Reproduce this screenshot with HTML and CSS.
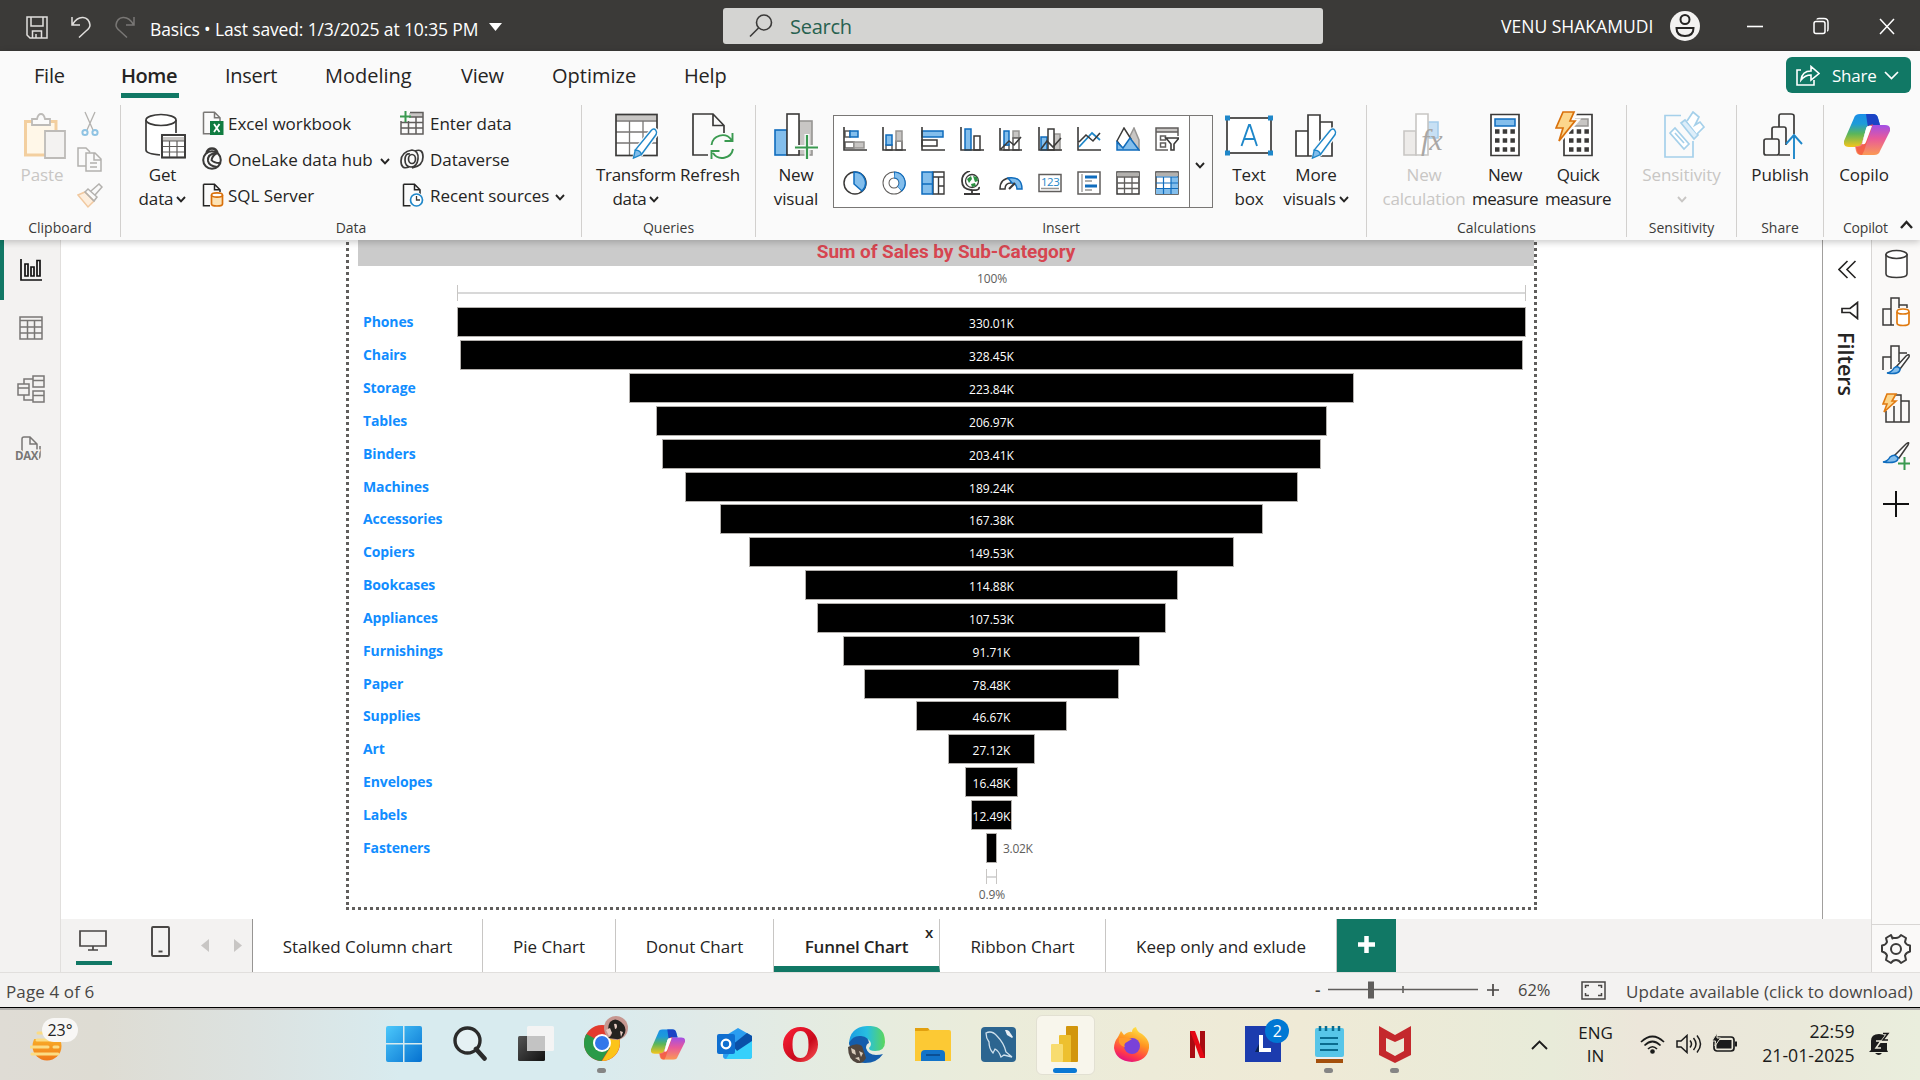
FILE: index.html
```html
<!DOCTYPE html>
<html lang="en">
<head>
<meta charset="utf-8">
<title>Basics - Power BI Desktop</title>
<link rel="stylesheet" href="styles.css">
</head>
<body>
<svg class="defs" width="0" height="0" aria-hidden="true">
  <defs>
    <linearGradient id="cpA" x1="0" y1="0" x2="0" y2="1"><stop offset="0" stop-color="#1a8fe8"/><stop offset=".3" stop-color="#1e9bd8"/><stop offset=".6" stop-color="#5bb65a"/><stop offset="1" stop-color="#f5c51c"/></linearGradient>
    <linearGradient id="cpB" x1="0" y1="0" x2="0" y2="1"><stop offset="0" stop-color="#a24fe6"/><stop offset=".45" stop-color="#e8599a"/><stop offset="1" stop-color="#fb9a54"/></linearGradient>
    <linearGradient id="win" x1="0" y1="0" x2="1" y2="1"><stop offset="0" stop-color="#4cc8fb"/><stop offset="1" stop-color="#0571d0"/></linearGradient>
    <linearGradient id="edge" x1="0" y1="0" x2="1" y2="0"><stop offset="0" stop-color="#1b9de2"/><stop offset=".5" stop-color="#27bfe0"/><stop offset="1" stop-color="#5bd65c"/></linearGradient>
    <linearGradient id="fox" x1=".8" y1="0" x2=".4" y2="1"><stop offset="0" stop-color="#fff04a"/><stop offset=".45" stop-color="#ff9422"/><stop offset=".8" stop-color="#ff3a4a"/><stop offset="1" stop-color="#e3137f"/></linearGradient>
    <linearGradient id="opera" x1="0" y1="0" x2="1" y2="1"><stop offset="0" stop-color="#ff2038"/><stop offset=".6" stop-color="#c90a1c"/><stop offset="1" stop-color="#ff5a5a"/></linearGradient>
    <linearGradient id="sun" x1="0" y1="0" x2="0" y2="1"><stop offset="0" stop-color="#fbc02d"/><stop offset="1" stop-color="#f07818"/></linearGradient>
    <linearGradient id="dark" x1="0" y1="0" x2="1" y2="1"><stop offset="0" stop-color="#555"/><stop offset="1" stop-color="#111"/></linearGradient>
    <symbol id="chev" viewBox="0 0 10 7"><path d="M1 1l4 4.4L9 1" fill="none" stroke="currentColor" stroke-width="1.9"/></symbol>
    <symbol id="page" viewBox="0 0 24 24"><path d="M1.5 1.2h11l5.500 5.500v5M1.500 1.200v21.500h7M12.500 1.200v5.500H18" fill="none" stroke="currentColor" stroke-width="1.500"/></symbol>
    <symbol id="pencil" viewBox="0 0 28 36"><path d="M3 26L21 4q3-3 5.500-.5t.5 5L10 31l-8 4z" fill="#fafafa" stroke="#fafafa" stroke-width="4"/><path d="M3 26L21 4q3-3 5-.5t.5 5L10 31z" fill="#fff" stroke="#1f87c9" stroke-width="1.700"/><path d="M3 26l-2 9 9-4q-1-5-7-5z" fill="#83beec" stroke="#1f87c9" stroke-width="1.500"/></symbol>
    <symbol id="copilot" viewBox="0 0 46 41"><path d="M10 4q1-4 6-4h13q4 0 5 4l2 7H26q-3 0-4 4l-4 14q-1 4-6 4H5q-6 0-5-6z" fill="url(#cpA)"/><path d="M22 0h7q4 0 5 4l2 7h-7q-4 0-5 3z" fill="#1c43c5"/><path d="M36 37q-1 4-6 4H17q-4 0-5-4l-1-5q5 1 7-3l5-14q1-4 5-4h13q6 0 5 6z" fill="url(#cpB)"/><path d="M24 12l-6 19q-1 2-6 2l1 4q1 4 5 4l2-4 9-27z" fill="#f4573e" opacity=".75"/><path d="M22 15q1-4 6-3l-6 16q-1 3-4 2z" fill="#fff"/></symbol>
  </defs>
</svg>

<header class="titlebar">
  <svg class="tb-save" width="22" height="23" viewBox="0 0 22 23" fill="none" stroke="#e1dfdd" stroke-width="1.500"><path d="M1 1h20v21H4l-3-3zM5 1v9h12V1M6.500 22v-7h9v7M10 22v-4"/></svg>
  <svg class="tb-undo" width="20" height="22" viewBox="0 0 20 22" fill="none" stroke="#e1dfdd" stroke-width="1.500"><path d="M1 1v8h8M1.500 8.500Q6 1 12 1.500T19 9q0 3-4 6l-7 6.500"/></svg>
  <svg class="tb-redo" width="20" height="22" viewBox="0 0 20 22" fill="none" stroke="#797775" stroke-width="1.500"><path d="M19 1v8h-8M18.500 8.500Q14 1 8 1.500T1 9q0 3 4 6l7 6.500"/></svg>
  <div class="doc-title">Basics • Last saved: 1/3/2025 at 10:35 PM</div>
  <svg class="doc-caret" width="13" height="8" viewBox="0 0 13 8"><path d="M0 0h13L6.500 8z" fill="#fff"/></svg>
  <div class="search">
    <svg width="24" height="24" viewBox="0 0 24 24" fill="none" stroke="#3b3a39" stroke-width="1.600"><circle cx="15" cy="8.500" r="7.500"/><path d="M9.500 14L1 22.500"/></svg>
    <span>Search</span>
  </div>
  <div class="user">VENU SHAKAMUDI</div>
  <svg class="avatar" width="30" height="30" viewBox="0 0 30 30"><circle cx="15" cy="15" r="15" fill="#f3f2f1"/><g fill="none" stroke="#252423" stroke-width="2"><circle cx="15" cy="8.500" r="4.500"/><path d="M6.500 17h17q0 8-8.500 8t-8.500-8z"/></g></svg>
  <div class="winbtns">
    <svg width="16" height="18" viewBox="0 0 16 18"><path d="M0 9.500h16" stroke="#fff" stroke-width="1.600"/></svg>
    <svg width="16" height="18" viewBox="0 0 16 18" fill="none" stroke="#fff" stroke-width="1.500"><rect x="1" y="4.500" width="11" height="12" rx="2"/><path d="M4 2.500q0-1 2-1h5q4 0 4 4V12q0 2-1 2"/></svg>
    <svg width="16" height="18" viewBox="0 0 16 18" stroke="#fff" stroke-width="1.500"><path d="M1 2l14 15M15 2L1 17"/></svg>
  </div>
</header>

<section class="ribbon">
  <nav class="tabs">
    <a>File</a><a class="on">Home</a><a>Insert</a><a>Modeling</a><a>View</a><a>Optimize</a><a>Help</a>
    <button class="share"><svg width="24" height="21" viewBox="0 0 24 21" fill="none" stroke="#fff" stroke-width="1.600"><path d="M5 5H1v15h17v-5M5 15q1-9 10-9V1.500l8 7-8 6.500v-5q-6 0-10 5z"/></svg><span>Share</span><svg width="15" height="9" viewBox="0 0 15 9"><path d="M1 1l6.500 6.500L14 1" fill="none" stroke="#fff" stroke-width="1.700"/></svg></button>
  </nav>
  <div class="groups">
    <div class="group g-clip">
      <div class="items">
        <div class="big off b-paste"><svg width="42" height="46" viewBox="0 0 42 46" fill="none" stroke-width="1.800"><path d="M1.500 8.500H32V42H1.500z" stroke="#f3cf9f" stroke-width="3" fill="#fff7e8"/><path d="M8 12V6h5q1-5 4-5t4 5h5v6z" fill="#fafafa" stroke="#bdbbb8"/><path d="M21 18h20v27H21z" fill="#f3f2f1" stroke="#bdbbb8"/></svg><span>Paste</span></div>
        <div class="smallcol">
          <svg width="18" height="26" viewBox="0 0 18 26" fill="none" stroke="#b3b1ae" stroke-width="1.300"><path d="M4 1l8 18M14 1L6 19"/><g stroke="#8fc3e3" stroke-width="2"><circle cx="4" cy="21.500" r="2.600"/><circle cx="14" cy="21.500" r="2.600"/></g></svg>
          <svg width="26" height="26" viewBox="0 0 26 26" fill="#fafafa" stroke="#b3b1ae" stroke-width="1.500"><path d="M9 19H1V1h8l4 4M9 6h9l6 6v12H9zM17 6v7h7M13 16h7M13 20h7"/></svg>
          <svg width="26" height="26" viewBox="0 0 26 26" fill="none" stroke="#b3b1ae" stroke-width="1.500"><path d="M1 12l7-3 9 9-6 6z" stroke="#f1c9a0" fill="#fdeedd"/><path d="M8 9l3-3 9 8-3 4zM14 8l8-7 3 3-7 8"/></svg>
        </div>
      </div>
      <div class="glabel">Clipboard</div>
    </div>
    <div class="group g-data">
      <div class="items">
        <div class="big b-get"><svg width="41" height="46" viewBox="0 0 41 46" fill="none" stroke="#3b3a39" stroke-width="1.700"><path d="M1 7v30q0 4 15 5h15V7z" fill="#fff" stroke="none"/><ellipse cx="16" cy="7" rx="15" ry="5.500" fill="#fff"/><path d="M1 7v30q0 4 15 5M31 7v13"/><rect x="15" y="20" width="26" height="26" fill="#fafafa" stroke="none"/><rect x="17" y="22" width="23" height="22.500" fill="#fff"/><path d="M17 26h23" stroke="#c8c6c4" stroke-width="4"/><path d="M17 28h23M17 33.500h23M17 39h23M24.500 28v16M32 28v16" stroke="#605e5c" stroke-width="1.200"/><rect x="17" y="22" width="23" height="22.500"/></svg><span>Get</span><span>data <svg class="cv"><use href="#chev"/></svg></span></div>
        <ul class="list l1">
          <li><svg width="24" height="24" viewBox="0 0 24 24"><use href="#page" color="#797775"/><rect x="8" y="10" width="13.500" height="14" fill="#107c41"/><path d="M12 13l5.500 8M17.500 13L12 21" stroke="#fff" stroke-width="1.800"/></svg>Excel workbook</li>
          <li><svg width="24" height="24" viewBox="0 0 24 24" fill="none" stroke="#3b3a39" stroke-width="2"><circle cx="10" cy="13" r="8.800"/><path d="M4.500 6Q6 1.500 10 1.500T15.500 6" stroke-width="2.600"/><path d="M15 5.500Q5 7 6 14q1 5 9 6M9 12.500q3 4 10 3.500M9.500 13q1-5 6-7"/></svg>OneLake data hub <svg class="cv"><use href="#chev"/></svg></li>
          <li><svg width="24" height="24" viewBox="0 0 24 24"><use href="#page"/><rect x="8" y="9" width="14" height="15" fill="#fafafa"/><path d="M9.500 12v9q0 2 5.500 2t5.500-2v-9" fill="#fde3b5" stroke="#d9700a" stroke-width="1.700"/><ellipse cx="15" cy="12" rx="5.500" ry="2.200" fill="#fff" stroke="#d9700a" stroke-width="1.700"/></svg>SQL Server</li>
        </ul>
        <ul class="list l2">
          <li><svg width="24" height="24" viewBox="0 0 24 24" fill="none"><path d="M9 2h14v4H9z" fill="#c8c6c4"/><path d="M1 10v13h22V1.500H10M9 6h14M1 11.500h22M1 17h22M8.500 10v13M16 6v17" stroke="#605e5c" stroke-width="1.500"/><path d="M5.500 0v11M0 5.500h11" stroke="#3a9a50" stroke-width="2"/></svg>Enter data</li>
          <li><svg width="24" height="24" viewBox="0 0 24 24" fill="none" stroke="#3b3a39" stroke-width="1.700"><ellipse cx="12" cy="12" rx="3.500" ry="4.500"/><path d="M9 20Q1 23 1 14T12 3q7 1 6 9t-7 8Q5 20 5 13t5-6M15 4q8-3 8 6T12 21"/></svg>Dataverse</li>
          <li><svg width="24" height="24" viewBox="0 0 24 24"><g transform="translate(2)"><use href="#page"/><circle cx="14.500" cy="17" r="7.500" fill="#fafafa"/><circle cx="14.500" cy="17" r="6" fill="#fff" stroke="#1f87c9" stroke-width="1.700"/><path d="M14.500 13v4h3.500" fill="none" stroke="#3b3a39" stroke-width="1.300"/></g></svg>Recent sources <svg class="cv"><use href="#chev"/></svg></li>
        </ul>
      </div>
      <div class="glabel">Data</div>
    </div>
    <div class="group g-query">
      <div class="items">
        <div class="big b-trans"><svg width="46" height="46" viewBox="0 0 46 46" fill="none"><rect x="1" y="1.500" width="41" height="41" fill="#fff"/><rect x="1" y="1.500" width="41" height="6" fill="#c8c6c4"/><path d="M1 8h41M1 19h41M1 30h41M14.500 8v35M28 8v35" stroke="#797775" stroke-width="1.300"/><rect x="1" y="1.500" width="41" height="41" stroke="#3b3a39" stroke-width="1.700"/><use href="#pencil" x="14" y="14" width="32" height="32"/></svg><span>Transform</span><span>data <svg class="cv"><use href="#chev"/></svg></span></div>
        <div class="big b-ref"><svg width="42" height="46" viewBox="0 0 42 46" fill="none" stroke-width="1.700"><path d="M16 42H1V1h20l11 11.500V20M21 1v11.500h11" stroke="#3b3a39"/><g stroke="#3a9a50" stroke-width="1.900"><path d="M19.500 32a11 11 0 0 1 20-5M41 36a11 11 0 0 1-20 4M40.500 20v8h-8M19.500 46v-8h8"/></g></svg><span>Refresh</span></div>
      </div>
      <div class="glabel">Queries</div>
    </div>
    <div class="group g-insert">
      <div class="items">
        <div class="big b-nv"><svg width="44" height="46" viewBox="0 0 44 46" stroke-width="1.600"><rect x="25" y="8" width="13" height="34" fill="#c8c6c4" stroke="#979593"/><rect x="1" y="17" width="12" height="25" fill="#83beec" stroke="#0f6cbd"/><rect x="13" y="1" width="12" height="41" fill="#fff" stroke="#3b3a39"/><path d="M33 21v25M20 34.500h24" stroke="#fafafa" stroke-width="5"/><path d="M33 22v24M21 34.500h23" stroke="#3a9a50" stroke-width="2.200"/></svg><span>New</span><span>visual</span></div>
        <div class="gallery">
          <div class="viz">
            <svg viewBox="0 0 24 24"><path d="M2 4h5v6H2zM2 15h9v6H2z" fill="#fff" stroke="#605e5c"/><path d="M11 15h10v6H11z" fill="#c8c6c4" stroke="#979593"/><path d="M7 4h8v6H7z" fill="#83beec" stroke="#0f6cbd"/><path d="M1 0v23h23" class="ax"/></svg>
            <svg viewBox="0 0 24 24"><path d="M4 18h6v5H4zM14 14h6v9h-6z" fill="#fff" stroke="#605e5c"/><path d="M14 4h6v10h-6z" fill="#c8c6c4" stroke="#979593"/><path d="M4 8h6v10H4z" fill="#83beec" stroke="#0f6cbd"/><path d="M1 0v23h23" class="ax"/></svg>
            <svg viewBox="0 0 24 24"><path d="M1 13h15v6H1z" fill="#fff" stroke="#3b3a39"/><path d="M1 4h21v6H1z" fill="#83beec" stroke="#0f6cbd"/><path d="M1 0v23h23" class="ax"/></svg>
            <svg viewBox="0 0 24 24"><path d="M14 9h6v14h-6z" fill="#fff" stroke="#3b3a39"/><path d="M5 2h6v21H5z" fill="#83beec" stroke="#0f6cbd"/><path d="M1 0v23h23" class="ax"/></svg>
            <svg viewBox="0 0 24 24"><path d="M14 4h6v7h-6z" fill="#c8c6c4" stroke="#979593"/><path d="M14 11h6v12h-6zM5 18h5v5H5z" fill="#fff" stroke="#605e5c"/><path d="M5 4h5v14H5z" fill="#83beec" stroke="#0f6cbd"/><path d="M2 22l8-8 5 4 7-8M1 1v22h22" class="ax"/></svg>
            <svg viewBox="0 0 24 24"><path d="M16 7h6v16h-6z" fill="#c8c6c4" stroke="#979593"/><path d="M3 10h6v13H3z" fill="#83beec" stroke="#0f6cbd"/><path d="M10 2h6v21h-6z" fill="#fff" stroke="#3b3a39"/><path d="M3 22l6-8 6 6 8-9M1 0v23h23" class="ax"/></svg>
            <svg viewBox="0 0 24 24"><path d="M2 20L15 6l8 7" fill="none" stroke="#1f87c9" stroke-width="1.800"/><path d="M2 15l7-7 7 6 7-8M1 0v23h23" class="ax"/></svg>
            <svg viewBox="0 0 24 24"><path d="M12 13l6-12 5 12v10z" fill="#c8c6c4" stroke="#979593"/><path d="M1 14L8 1l7 11-8 10z" fill="#fff" stroke="#3b3a39"/><path d="M1 23v-8l6 6 7-10 9 12z" fill="#83beec" stroke="#0f6cbd"/></svg>
            <svg viewBox="0 0 24 24"><path d="M1 1h22v4H1z" fill="#c8c6c4"/><path d="M13 23H1V1h22v8M1 5h22M5.500 9h5v4h-5zM5.500 16h5v4h-5z" fill="none" stroke="#605e5c" stroke-width="1.500"/><path d="M11 11h13l-5 6v6h-3v-6z" fill="#fff" class="ax2"/></svg>
            <svg viewBox="0 0 24 24"><circle cx="12" cy="12" r="11" fill="#fff" stroke="#3b3a39" stroke-width="1.500"/><path d="M11 1a11 11 0 0 1 8 19l-8-7z" fill="#83beec" stroke="#0f6cbd"/></svg>
            <svg viewBox="0 0 24 24"><circle cx="12" cy="12" r="8" fill="none" stroke="#605e5c" stroke-width="7"/><circle cx="12" cy="12" r="8" fill="none" stroke="#fff" stroke-width="5"/><path d="M12 4a8 8 0 0 1 5.500 14" fill="none" stroke="#0f6cbd" stroke-width="7"/><path d="M12.700 4a8 8 0 0 1 5 13.500" fill="none" stroke="#83beec" stroke-width="5.200"/></svg>
            <svg viewBox="0 0 24 24"><path d="M12 1h11v22H12zM12 6h11M17.500 6v17M17.500 15h5.500" fill="#fff" stroke="#3b3a39" stroke-width="1.400"/><path d="M1 1h10.500v22H1zM1 13h10.500" fill="#83beec" stroke="#0f6cbd" stroke-width="1.500"/></svg>
            <svg viewBox="0 0 24 24"><circle cx="12" cy="10" r="6.500" fill="#fff" stroke="#3b3a39" stroke-width="1.300"/><path d="M7 8l4-3 1 3-3 4zM13 5l4 1 1 4-3 1zM11 13l4-1 1 3-4 1z" fill="#2a9040"/><path d="M10 0Q2 2 2 10t9 9 8-3M12 19v4M4 23h16" fill="none" stroke="#3b3a39" stroke-width="1.800"/></svg>
            <svg viewBox="0 0 24 24"><path d="M1 18q0-11 11-11v5q-6 0-6 6z" fill="#fff" stroke="#3b3a39" stroke-width="1.500"/><path d="M9 7q14-2 14 11h-5q0-5-5-6z" fill="#83beec" stroke="#0f6cbd" stroke-width="1.500"/><path d="M10 18l6-6" stroke="#3b3a39" stroke-width="2.200"/></svg>
            <svg viewBox="0 0 24 24"><rect x="1" y="3.500" width="22" height="17" fill="#fff" stroke="#605e5c" stroke-width="1.500"/><path d="M3 17.500h18" stroke="#979593" stroke-width="1.500"/><text x="3" y="15" class="n123">123</text></svg>
            <svg viewBox="0 0 24 24"><rect x="1" y="1" width="22" height="22" fill="#fff" stroke="#605e5c" stroke-width="1.500"/><path d="M5 3v18M8 10h7M8 19h7" stroke="#979593" stroke-width="1.300"/><path d="M8 6h12M8 15h12" stroke="#0f6cbd" stroke-width="2.800"/></svg>
            <svg viewBox="0 0 24 24"><path d="M1 1h22v22H1z" fill="#fff" stroke="#3b3a39" stroke-width="1.500"/><path d="M1 3.500h22" stroke="#b3b1ae" stroke-width="4"/><path d="M1 6h22M1 12h22M1 17.500h22M8.500 6v17M16 6v17" stroke="#605e5c" stroke-width="1.300"/></svg>
            <svg viewBox="0 0 24 24"><path d="M1 1h22v22H1z" fill="#fff" stroke="#3b3a39" stroke-width="1.500"/><path d="M1 3.500h22" stroke="#b3b1ae" stroke-width="4"/><path d="M16 6h7v17H1v-5.500h15z" fill="#83beec"/><path d="M1 6h22M1 12h22M1 17.500h22M8.500 6v17M16 6v17" stroke="#0f6cbd" stroke-width="1.200"/></svg>
          </div>
          <div class="drop"><svg class="cv"><use href="#chev"/></svg></div>
        </div>
        <div class="big b-text"><svg width="48" height="46" viewBox="0 0 48 46"><rect x="2" y="5" width="44" height="35" fill="#fff" stroke="#3b3a39" stroke-width="1.700"/><path d="M16.500 33L24 12h1l7 21M19 26h11" fill="none" stroke="#1f87c9" stroke-width="1.900"/><path d="M0 2.500h5v5H0zM43 2.500h5v5h-5zM0 37.500h5v5H0zM43 37.500h5v5h-5z" fill="#1f87c9"/></svg><span>Text</span><span>box</span></div>
        <div class="big b-more"><svg width="45" height="46" viewBox="0 0 45 46" fill="#fff" stroke="#3b3a39" stroke-width="1.700"><path d="M1 18h12v25H1zM25 9h12v34H25zM13 2h12v41H13z"/><use href="#pencil" x="12" y="14" width="34" height="32"/></svg><span>More</span><span>visuals <svg class="cv"><use href="#chev"/></svg></span></div>
      </div>
      <div class="glabel">Insert</div>
    </div>
    <div class="group g-calc">
      <div class="items">
        <div class="big off b-nc"><svg width="42" height="46" viewBox="0 0 42 46" stroke-width="1.600"><path d="M25 9h10v16H25z" fill="#c7e0f4" stroke="#a5cdec"/><path d="M1 18h12v24H1z" fill="#edebe9" stroke="#c8c6c4"/><path d="M13 1h12v41H13z" fill="#fff" stroke="#c8c6c4"/><text x="18" y="37" class="fx">fx</text></svg><span>New</span><span>calculation</span></div>
        <div class="big b-nm"><svg width="30" height="46" viewBox="0 0 30 46"><path d="M1 1.500h28v41H1z" fill="#fff" stroke="#3b3a39" stroke-width="1.700"/><path d="M5 6h20v7H5z" fill="#83beec" stroke="#0f6cbd" stroke-width="1.500"/><path d="M5 18.500h20M5 27.500h20M5 36.500h20" stroke="#3b3a39" stroke-width="4.500" stroke-dasharray="4.500 3.200"/></svg><span>New</span><span>measure</span></div>
        <div class="big b-qm"><svg width="38" height="48" viewBox="0 0 38 48"><path d="M9 3.500h28v41H9z" fill="#fff" stroke="#3b3a39" stroke-width="1.700"/><path d="M16 8h17v7H16z" fill="#c8c6c4" stroke="#979593" stroke-width="1.500"/><path d="M14 20.500h20M14 29.500h20M14 38.500h20" stroke="#3b3a39" stroke-width="4.500" stroke-dasharray="4.500 3.200"/><path d="M8 1h12l-4 9h5L4 30l4-13H1z" fill="#fcd68c" stroke="#fafafa" stroke-width="5"/><path d="M8 1h11l-4 9h5L4 30l4-13H1z" fill="#fcd68c" stroke="#d9700a" stroke-width="1.700"/></svg><span>Quick</span><span>measure</span></div>
      </div>
      <div class="glabel">Calculations</div>
    </div>
    <div class="group g-sens">
      <div class="items"><div class="big off b-se"><svg width="41" height="48" viewBox="0 0 41 48" fill="none" stroke="#a5d0ea" stroke-width="1.700"><path d="M17 4.500H1V46h28V30"/><path d="M6 22l5-5 14 16-5 5zM11 22l9 10" fill="#fff"/><path d="M17 12l4-3 13 15-4 4z" fill="#ddeefa"/><path d="M23 10l6-9 6 5-4 8 5-3 4 5-7 7" fill="#fff"/></svg><span>Sensitivity</span><span><svg class="cv"><use href="#chev"/></svg></span></div></div>
      <div class="glabel">Sensitivity</div>
    </div>
    <div class="group g-share">
      <div class="items"><div class="big b-pub"><svg width="41" height="46" viewBox="0 0 41 46" fill="none" stroke="#3b3a39" stroke-width="1.700"><rect x="1" y="26" width="15" height="16" rx="2"/><path d="M9 26V16q0-2 2-2h10q2 0 2 2v16M16 14V3q0-2 2-2h10q3 0 3 2v18M16 42h11"/><path d="M31 46V22M23 31l8-9 8 9" stroke="#1f87c9" stroke-width="1.900"/></svg><span>Publish</span></div></div>
      <div class="glabel">Share</div>
    </div>
    <div class="group g-cop">
      <div class="items"><div class="big b-cop"><svg width="46" height="41" viewBox="0 0 46 41"><use href="#copilot"/></svg><span>Copilo</span></div></div>
      <div class="glabel"><span>Copilot</span><svg width="13" height="9" viewBox="0 0 13 9"><path d="M1 8l5.500-6L12 8" fill="none" stroke="#252423" stroke-width="2.400"/></svg></div>
    </div>
  </div>
</section>

<div class="workspace">
  <aside class="rail">
    <div class="rail-item on"><svg width="22" height="22" viewBox="0 0 22 22" fill="none" stroke="#111" stroke-width="1.700"><path d="M1 0v21h21M5 5h3v12H5zM11 8h3v9h-3zM17 1.500h3V17h-3z"/></svg></div>
    <div class="rail-item"><svg width="24" height="24" viewBox="0 0 24 24" fill="none" stroke="#797775" stroke-width="1.500"><path d="M1 1h22v22H1zM1 4.500h22M1 11h22M1 17h22M8.500 4.500V23M15.500 4.500V23"/></svg></div>
    <div class="rail-item"><svg width="28" height="28" viewBox="0 0 28 28" fill="none" stroke="#797775" stroke-width="1.500"><path d="M1 9h11v11H1zM1 13h11M16 1h11v11H16zM16 5.500h11M16 16h11v11H16zM16 20.500h11M7 9V4h9M7 20v5h9"/></svg></div>
    <div class="rail-item"><svg width="30" height="28" viewBox="0 0 30 28" fill="none" stroke="#797775" stroke-width="1.500"><path d="M8 16V3q0-2 2-2h6l7 7v9q0 4-3 6M16 1v7h7M26 10v9q0 4-3 5"/><text x="1" y="24" class="dax">DAX</text></svg></div>
  </aside>

  <main class="center">
    <div class="canvas-row">
      <div class="canvas">
        <div class="frame">
          <h1>Sum of Sales by Sub-Category</h1>
          <div class="pct">100%</div>
          <div class="range"></div>
          <div class="funnel">
            <div class="row"><b>Phones</b><div class="track"><i style="width:100%">330.01K</i></div></div>
            <div class="row"><b>Chairs</b><div class="track"><i style="width:99.53%">328.45K</i></div></div>
            <div class="row"><b>Storage</b><div class="track"><i style="width:67.83%">223.84K</i></div></div>
            <div class="row"><b>Tables</b><div class="track"><i style="width:62.72%">206.97K</i></div></div>
            <div class="row"><b>Binders</b><div class="track"><i style="width:61.64%">203.41K</i></div></div>
            <div class="row"><b>Machines</b><div class="track"><i style="width:57.34%">189.24K</i></div></div>
            <div class="row"><b>Accessories</b><div class="track"><i style="width:50.72%">167.38K</i></div></div>
            <div class="row"><b>Copiers</b><div class="track"><i style="width:45.31%">149.53K</i></div></div>
            <div class="row"><b>Bookcases</b><div class="track"><i style="width:34.81%">114.88K</i></div></div>
            <div class="row"><b>Appliances</b><div class="track"><i style="width:32.58%">107.53K</i></div></div>
            <div class="row"><b>Furnishings</b><div class="track"><i style="width:27.79%">91.71K</i></div></div>
            <div class="row"><b>Paper</b><div class="track"><i style="width:23.78%">78.48K</i></div></div>
            <div class="row"><b>Supplies</b><div class="track"><i style="width:14.14%">46.67K</i></div></div>
            <div class="row"><b>Art</b><div class="track"><i style="width:8.22%">27.12K</i></div></div>
            <div class="row"><b>Envelopes</b><div class="track"><i style="width:4.99%">16.48K</i></div></div>
            <div class="row"><b>Labels</b><div class="track"><i style="width:3.78%">12.49K</i></div></div>
            <div class="row"><b>Fasteners</b><div class="track"><i style="width:1%"></i><span class="outside">3.02K</span></div></div>
          </div>
          <div class="range end"></div>
          <div class="pct low">0.9%</div>
        </div>
      </div>
      <aside class="filters">
        <svg width="19" height="19" viewBox="0 0 19 19" fill="none" stroke="#252423" stroke-width="1.600"><path d="M9.500 1L1 9.500 9.500 18M17.500 1L9 9.500l8.500 8.500"/></svg>
        <svg class="funnel-ico" width="18" height="19" viewBox="0 0 18 19" fill="none" stroke="#252423" stroke-width="1.700"><path d="M16.500 1.500v16L9 11.500H1v-4h8z"/></svg>
        <span>Filters</span>
      </aside>
    </div>
    <div class="pages">
      <div class="views">
        <div class="view on"><svg width="28" height="21" viewBox="0 0 28 21" fill="none" stroke="#484644" stroke-width="1.700"><path d="M1 1h26v15H1zM14 16v4M9 20h10"/></svg></div>
        <svg class="phone" width="19" height="31" viewBox="0 0 19 31" fill="none" stroke="#484644" stroke-width="1.900"><rect x="1" y="1" width="17" height="29" rx="1"/><path d="M7.500 25.500h4"/></svg>
        <svg class="prev" width="8" height="13"><path d="M8 0v13L0 6.500z" fill="#c8c6c4"/></svg>
        <svg class="next" width="8" height="13"><path d="M0 0v13l8-6.500z" fill="#c8c6c4"/></svg>
      </div>
      <div class="ptab p1">Stalked Column chart</div>
      <div class="ptab p2">Pie Chart</div>
      <div class="ptab p3">Donut Chart</div>
      <div class="ptab p4 on">Funnel Chart<span class="x">x</span></div>
      <div class="ptab p5">Ribbon Chart</div>
      <div class="ptab p6">Keep only and exlude</div>
      <button class="add"><svg width="17" height="17" viewBox="0 0 17 17"><path d="M8.500 0v17M0 8.500h17" stroke="#fff" stroke-width="4.500"/></svg></button>
    </div>
  </main>

  <aside class="panes">
    <svg width="28" height="30" viewBox="0 0 28 30" fill="#fff" stroke="#3b3a39" stroke-width="1.600"><path d="M4 5v20q0 3.500 10.500 3.500T25 25V5"/><ellipse cx="14.500" cy="5.500" rx="10.500" ry="4"/></svg>
    <svg width="28" height="30" viewBox="0 0 28 30" fill="none" stroke="#3b3a39" stroke-width="1.500"><path d="M12 28H1V12h8M9 28V1h8v10M17 8h8v3"/><path d="M15 15v11q0 2.500 6 2.500t6-2.500V15" fill="#fff" stroke="#e07a10" stroke-width="1.700"/><ellipse cx="21" cy="14.500" rx="6" ry="2.500" fill="#fff" stroke="#e07a10" stroke-width="1.700"/></svg>
    <svg width="28" height="30" viewBox="0 0 28 30" fill="none" stroke="#3b3a39" stroke-width="1.500"><path d="M1 25V12h8v12M9 12V1h8v16M17 8h8"/><path d="M14 22L24 11q4-3 3 1l-9 12z" fill="#fff"/><path d="M5 28q5-1 7-5 4-3 6 1 0 6-13 4z" fill="#83beec" stroke="#0f6cbd"/></svg>
    <svg width="28" height="30" viewBox="0 0 28 30" fill="none" stroke="#3b3a39" stroke-width="1.500"><path d="M4 18v11h23V8h-8M12 13v16M19 29V2h-6" fill="none"/><path d="M5 1h9l-4 7h4L2 19l3-8H1z" fill="#fcd68c" stroke="#e07a10" stroke-width="1.600"/></svg>
    <svg width="28" height="30" viewBox="0 0 28 30" fill="none" stroke="#3b3a39" stroke-width="1.500"><path d="M12 15L24 3q4-3 2 1L17 17z" fill="#fff"/><path d="M1 21q5-1 7-5 5-4 8 1 0 6-15 4z" fill="#83beec" stroke="#0f6cbd"/><path d="M22.500 16v13M16 22.500h12" stroke="#3a9a50" stroke-width="2"/></svg>
    <svg width="28" height="30" viewBox="0 0 28 30" stroke="#111" stroke-width="2"><path d="M14 2v26M1 15h26"/></svg>
    <div class="gear"><svg width="32" height="32" viewBox="0 0 32 32" fill="none" stroke="#3b3a39" stroke-width="2"><circle cx="16" cy="16" r="5"/><path d="M12.500 5.500L11 2l-5 3 1 4q-1 3-5 3.500v6q4 1 5 4L6 27l5 3q2-3 5-3t5 3l5-3-1-4.500q1-3 5-4v-6q-4-.5-5-3.500l1-4-5-3q-2 3-5 3t-3.500-.5z" stroke-linejoin="round"/></svg></div>
  </aside>
</div>

<footer class="status">
  <span class="pg">Page 4 of 6</span>
  <span class="minus">-</span>
  <svg class="slider" width="150" height="18" viewBox="0 0 150 18"><path d="M0 8.500h150" stroke="#605e5c" stroke-width="1.300"/><path d="M75 5v7" stroke="#605e5c" stroke-width="1.600"/><path d="M40 .5h6v17h-6z" fill="#605e5c"/></svg>
  <svg class="plus" width="12" height="12" viewBox="0 0 12 12"><path d="M6 0v12M0 6h12" stroke="#484644" stroke-width="1.700"/></svg>
  <span class="pc">62%</span>
  <svg class="fit" width="25" height="19" viewBox="0 0 25 19" fill="none" stroke="#484644" stroke-width="1.500"><path d="M1 1h23v17H1zM4.500 7V4.500H8M17 4.500h3.500V7M20.500 12v2.500H17M8 14.500H4.500V12"/></svg>
  <span class="upd">Update available (click to download)</span>
</footer>

<div class="taskbar">
  <div class="weather">
    <svg width="32" height="30" viewBox="0 0 32 30"><circle cx="17" cy="15" r="14.500" fill="url(#sun)"/><path d="M0 0h18v8H0z" fill="#dedcd4"/><path d="M8 2h10M7 9h12M1 16h17M24 16h4M2 23h26" stroke="#fbdc84" stroke-width="3" stroke-linecap="round"/></svg>
    <span class="temp">23°</span>
  </div>
  <div class="apps">
    <div class="app"><svg width="36" height="36" viewBox="0 0 36 36"><path d="M0 2q0-2 2-2h15v17H0zM18.500 0H34q2 0 2 2v15H18.500zM0 18.500h17V36H2q-2 0-2-2zM18.500 18.500H36V34q0 2-2 2H18.500z" fill="url(#win)"/></svg></div>
    <div class="app"><svg width="34" height="36" viewBox="0 0 34 36"><circle cx="14.500" cy="14.500" r="12.500" fill="#ffffff55" stroke="#2b2b2b" stroke-width="3.400"/><path d="M23 23l8.500 9.500" stroke="#2b2b2b" stroke-width="4.600" stroke-linecap="round"/></svg></div>
    <div class="app"><svg width="36" height="36" viewBox="0 0 36 36"><rect x="0" y="10" width="27" height="25" rx="1.500" fill="url(#dark)"/><rect x="9" y="0" width="27" height="25" rx="1.500" fill="#f4f4f4"/><path d="M9 10h18v15H9z" fill="#c3c3c3"/></svg></div>
    <div class="app run"><svg width="44" height="46" viewBox="0 0 44 46"><circle cx="18" cy="27" r="18" fill="#e23b2e"/><path d="M2.400 18a18 18 0 0 0 15 27l9-14z" fill="#2a9a48"/><path d="M18 45a18 18 0 0 0 16-26H18l8 13z" fill="#fcc419"/><circle cx="18" cy="27" r="9" fill="#fff"/><circle cx="18" cy="27" r="7" fill="#3277ea"/><circle cx="32" cy="12" r="12" fill="#c69790"/><path d="M26 6q5-5 11 0t4 11q-3 7-9 6l-8-1q5-3 3-6-5-3-1-10z" fill="#25221f"/><path d="M30 8q3-1 3 2t-2 3zM22 14l4-2 2 5-3 3zM36 15l3 1-2 5z" fill="#e5c9c0"/></svg></div>
    <div class="app"><svg width="34" height="31" viewBox="0 0 46 41"><use href="#copilot"/></svg></div>
    <div class="app"><svg width="36" height="32" viewBox="0 0 36 32"><path d="M8 8L21 0l14 8v20q0 3-3 3H9q-3 0-3-3z" fill="#2a9df0"/><path d="M17 18L35 8v20q0 3-3 3H9z" fill="#36d0fb"/><path d="M15 17L30 5l5 3v5L20 23z" fill="#0a50a8"/><rect y="6" width="18" height="20" rx="2" fill="#0f6fd0"/><circle cx="9" cy="16" r="4.300" fill="none" stroke="#fff" stroke-width="2.300"/></svg></div>
    <div class="app"><svg width="35" height="35" viewBox="0 0 35 35"><path fill-rule="evenodd" d="M17.500 0a17.500 17.500 0 1 0 0 35 17.500 17.500 0 1 0 0-35zm0 4q8 0 8 13.500t-8 13.500-8-13.500 8-13.500z" fill="url(#opera)"/></svg></div>
    <div class="app"><svg width="37" height="37" viewBox="0 0 37 37"><path d="M1 19Q1 1 19 0t18 16q0 9-10 9-6 0-6-3 4-4 0-8-5-4-11-1T1 19z" fill="url(#edge)"/><path d="M1 17Q5 9 13 10t8 7q-3 1-3 5 2 7 10 7 4 0 7-1Q29 37 17 37T1 17z" fill="#145dac"/><path d="M0 21q9-5 14-1l4 12q-3 6-9 5Q0 34 0 21z" fill="#51463e"/><path d="M3 22l4 2 1 5-4-2zM11 25l4 2-2 4zM7 32l4-1 1 4z" fill="#d9cbbb"/></svg></div>
    <div class="app"><svg width="36" height="33" viewBox="0 0 36 33"><path d="M0 0h13l4 5H0z" fill="#e2a00e"/><path d="M0 3h12l3-1h19q2 0 2 2v29H0z" fill="#fcc934"/><path d="M6 33v-7q0-4 4-4h16q4 0 4 4v7z" fill="#1273c8"/><path d="M11 27h14" stroke="#0b4f94" stroke-width="2"/></svg></div>
    <div class="app"><svg width="35" height="35" viewBox="0 0 35 35"><rect width="35" height="35" rx="4" fill="#2c6590"/><path d="M5 6q6-3 11 3 7 7 9 16l6 5-8-2-3 2q-2-6-6-8l-2 4Q8 22 8 15 5 11 5 6z" fill="none" stroke="#cfe0ec" stroke-width="1.300"/><path d="M24 3l2 5 5 3 1-1-4-6-2-1z" fill="#e8eef4"/></svg></div>
    <div class="app active"><svg width="28" height="36" viewBox="0 0 28 36"><rect x="15" y="0" width="12" height="36" rx="1" fill="#d2960c"/><rect x="8" y="9" width="12" height="27" rx="1" fill="#edc02f"/><rect x="0" y="18" width="12" height="18" rx="1" fill="#f8dc6f"/></svg></div>
    <div class="app"><svg width="35" height="35" viewBox="0 0 35 35"><path d="M4 10l3-6 3 4q5-4 8-3 0-4 4-5 1 5 6 7 8 6 7 14-2 13-17 14Q2 34 0 21q0-6 4-11z" fill="url(#fox)"/><circle cx="18" cy="19" r="8" fill="#7a42d8"/><path d="M5 11q9-1 13 1l-5 3q-4 2-2 5-7-1-6-9z" fill="#ff9a2a"/></svg></div>
    <div class="app"><svg width="15" height="27" viewBox="0 0 15 27"><path d="M0 0h5v27H0zM10 0h5v27h-5z" fill="#a80c12"/><path d="M0 0h5l10 27h-5z" fill="#e50914"/></svg></div>
    <div class="app lapp"><svg width="36" height="36" viewBox="0 0 36 36"><rect width="36" height="36" fill="#1c3cae"/><path d="M10 26l4-8v8z" fill="#0b2352"/><path d="M14 9v17h12v-4h-8V9z" fill="#fff"/></svg><span class="badge">2</span></div>
    <div class="app run"><svg width="29" height="37" viewBox="0 0 29 37"><path d="M1 32h27v5H1z" fill="#a4500c"/><path d="M1 28h27v5H1z" fill="#eee"/><rect x="0" y="2" width="29" height="29" rx="2" fill="#57c5e8"/><path d="M5 12h18M5 18h18M5 24h18" stroke="#0a6c90" stroke-width="2"/><path d="M5 0v5M11 0v5M18 0v5M24 0v5" stroke="#0a6c90" stroke-width="2.500"/></svg></div>
    <div class="app run"><svg width="32" height="37" viewBox="0 0 32 37"><path fill-rule="evenodd" d="M0 0l16 9L32 0v29l-16 8-16-8zm7 12v13l9 5 9-5V12l-9 4z" fill="#c4282c"/></svg></div>
  </div>
  <div class="tray">
    <svg class="t-up" width="17" height="10" viewBox="0 0 17 10"><path d="M1 9l7.500-7.500L16 9" fill="none" stroke="#1b1b1b" stroke-width="1.900"/></svg>
    <div class="lang">ENG<br>IN</div>
    <svg class="t-wifi" width="25" height="19" viewBox="0 0 25 19" fill="none" stroke="#1b1b1b" stroke-width="1.700"><path d="M1 7q11.500-11 23 0M4.500 10.500q8-8 16 0M8 14q4.500-4.500 9 0"/><circle cx="12.500" cy="16.500" r="1.500" fill="#1b1b1b"/></svg>
    <svg class="t-vol" width="26" height="20" viewBox="0 0 26 20" fill="none" stroke="#1b1b1b" stroke-width="1.500"><path d="M1 7h4l6-5.500v17L5 13H1zM14 6.500q3 3.500 0 7M17.500 4q5 6 0 12M21 1.500q7 8.500 0 17"/></svg>
    <svg class="t-bat" width="26" height="20" viewBox="0 0 26 20"><rect x="2" y="4" width="20" height="14" rx="3" fill="none" stroke="#1b1b1b" stroke-width="1.700"/><path d="M4.500 7h15v8.500h-15zM23 8.500h2v5h-2z" fill="#1b1b1b"/><path d="M5 0L0 8h3.500L3 13l5.500-8H5z" fill="#1b1b1b" stroke="#ece9da" stroke-width="1"/></svg>
    <div class="clock">22:59<br>21-01-2025</div>
    <svg class="t-bell" width="22" height="24" viewBox="0 0 22 24"><path d="M3 18V9q0-7 8-7t8 7v9l1 2H1zM7 21h7q-3 4-7 0z" fill="#1b1b1b"/><path d="M8 9h5l-5 7h5" fill="none" stroke="#ebe9da" stroke-width="1.500"/><path d="M15 1h6l-6 8h6" fill="none" stroke="#ebe9da" stroke-width="4"/><path d="M15 1.500h5l-5 6.500h5" fill="none" stroke="#1b1b1b" stroke-width="1.500"/></svg>
  </div>
</div>
</body>
</html>
```
FILE: styles.css
```css
* { box-sizing: border-box; }
body { margin: 0; width: 1920px; height: 1080px; overflow: hidden; display: flex; flex-direction: column; font-family: "Open Sans", "Noto Sans", sans-serif; font-size: 17px; color: #252423; background: #fff; }
svg { display: block; flex: none; }
.defs { position: absolute; }
button { border: 0; padding: 0; font: inherit; }

/* title bar */
.titlebar { height: 51px; flex: none; background: #3b3a38; color: #fff; display: flex; align-items: center; padding-left: 26px; white-space: nowrap; }
.tb-save { margin-top: 3px; }
.tb-undo { margin: 2px 0 0 23px; }
.tb-redo { margin: 2px 0 0 24px; }
.doc-title { width: 339px; margin: 7px 0 0 15px; font-size: 17.500px; letter-spacing: -.14px; }
.doc-caret { margin-top: 3px; }
.search { width: 600px; height: 36px; margin-left: 221px; background: #d4d4d2; border-radius: 3px; display: flex; align-items: center; gap: 17px; padding-left: 26px; color: #27614f; font-size: 20px; letter-spacing: -.25px; }
.search span { margin-top: 2px; }
.user { width: 155px; margin-left: 178px; font-size: 17.500px; letter-spacing: .02px; }
.avatar { margin-left: 14px; }
.winbtns { display: flex; gap: 50px; margin-left: 47px; }

/* ribbon */
.ribbon { height: 189px; flex: none; background: #fafafa; position: relative; z-index: 2; box-shadow: 0 2px 7px rgba(0,0,0,.22); }
.tabs { height: 54px; display: flex; padding-left: 34px; font-size: 20px; letter-spacing: -.2px; }
.tabs a { height: 47px; line-height: 49px; margin-right: 48px; border-bottom: 5px solid transparent; }
.tabs a:nth-child(1) { width: 31px; margin-right: 56px; }
.tabs a:nth-child(2) { width: 58px; margin-right: 46px; }
.tabs a:nth-child(3) { width: 52px; letter-spacing: -.3px; }
.tabs a:nth-child(4) { width: 88px; letter-spacing: 0; }
.tabs a:nth-child(5) { width: 44px; margin-right: 47px; }
.tabs a:nth-child(6) { width: 84px; letter-spacing: 0; }
.tabs a.on { border-color: #117865; font-weight: 600; letter-spacing: -.45px; }
.share { margin: 6px 9px 0 auto; width: 125px; height: 36px; background: #117865; color: #fff; border-radius: 6px; display: flex; align-items: center; padding-left: 10px; gap: 8px; font-size: 17px; }
.share span { width: 44px; margin-left: 4px; letter-spacing: -.2px; }
.groups { display: flex; height: 135px; }
.group { display: flex; flex-direction: column; height: 132px; border-right: 1px solid #d2d0ce; }
.items { display: flex; height: 112px; }
.glabel { font-size: 14px; line-height: 20px; padding-top: 3px; height: 24px; text-align: center; color: #3b3a39; position: relative; top: 1px; }
.g-clip { width: 121px; }
.g-data { width: 461px; }
.g-query { width: 174px; }
.g-insert { width: 611px; }
.g-calc { width: 260px; }
.g-sens { width: 110px; }
.g-share { width: 87px; }
.g-cop { width: 96px; border: 0; }
.big { display: flex; flex-direction: column; align-items: center; padding-top: 8px; line-height: 24px; white-space: nowrap; letter-spacing: -.1px; }
.big > svg { margin-bottom: 4px; }
.big > span { display: flex; align-items: center; gap: 3px; min-height: 24px; }
.off { color: #c8c6c4; }
.cv { width: 10px; height: 7px; }
.b-paste { width: 62px; margin-left: 11px; }
.b-paste > svg { margin-left: 6px; }
.smallcol { display: flex; flex-direction: column; align-items: center; gap: 10px; width: 26px; margin-left: 4px; padding-top: 6px; }
.b-get { width: 77px; margin: 0 1px 0 3px; }
.b-get > svg { margin-left: 6px; }
.list { list-style: none; margin: 0; padding: 0; }
.list li { display: flex; align-items: center; height: 36px; white-space: nowrap; letter-spacing: -.05px; }
.list li > svg:first-child { margin-right: 2px; }
.list .cv { margin: 4px 0 0 7px; }
.l1 { width: 198px; }
.l2 li > svg:first-child { margin-right: 6px; }
.l2 .cv { margin-left: 6px; }
.b-trans { width: 84px; margin-left: 12px; letter-spacing: -.35px; }
.b-trans > svg { margin-left: 3px; }
.b-ref { width: 60px; margin-left: 2px; }
.b-ref > svg { margin-left: 6px; }
.b-nv { width: 70px; margin-left: 5px; margin-right: 2px; }
.gallery { width: 380px; height: 93px; margin-top: 10px; border: 1.500px solid #797775; background: #fff; display: flex; }
.viz { width: 355px; display: grid; grid-template-columns: repeat(9, 24px); gap: 20px 15px; padding: 11px 0 0 9px; align-content: start; }
.viz svg { width: 24px; height: 24px; stroke-width: 1.500; }
.ax { fill: none; stroke: #3b3a39; stroke-width: 1.600; }
.ax2 { stroke: #3b3a39; stroke-width: 1.600; }
.n123 { font-size: 11.500px; letter-spacing: -.5px; fill: #1f87c9; stroke: none; }
.drop { flex: 1; border-left: 1px solid #797775; background: #fafafa; display: flex; align-items: center; justify-content: center; padding: 8px 3px 0 0; }
.b-text { width: 66px; margin-left: 3px; }
.b-more { width: 68px; }
.b-more > svg { margin-left: 2px; }
.b-nc { width: 86px; margin-left: 14px; letter-spacing: -.2px; }
.fx { font: italic 30px "Liberation Serif", serif; fill: #a9a7a5; stroke: none; }
.b-nm { width: 76px; letter-spacing: -.55px; }
.b-qm { width: 70px; letter-spacing: -.55px; }
.b-qm > svg { margin: -2px 9px 4px 0; }
.b-se { width: 109px; }
.b-se > svg { margin: -2px 0 4px 6px; }
.b-pub { width: 86px; }
.b-pub > svg { margin-left: 7px; }
.b-cop { width: 52px; margin-left: 14px; padding-top: 9px; }
.b-cop > svg { margin: 0 0 8px 5px; }
.g-cop .glabel { display: flex; padding-left: 19px; gap: 8px; }
.g-cop .glabel span { width: 49px; overflow: hidden; text-align: left; letter-spacing: -.2px; }
.g-cop .glabel svg { margin-top: 2px; }

/* workspace */
.workspace { flex: none; height: 732px; display: flex; }
.rail { width: 61px; background: #f3f2f1; border-right: 1px solid #e1dfdd; }
.rail-item { height: 60px; display: flex; align-items: center; justify-content: center; }
.rail-item.on { border-left: 4px solid #117865; padding: 0 3px 1px 0; }
.rail-item svg { margin-right: -1px; }
.rail-item:nth-child(2) { height: 56px; }
.rail-item:nth-child(3) { height: 66px; }
.rail-item:nth-child(4) { height: 56px; padding-right: 4px; }
.dax { font: bold 11.500px "Open Sans", sans-serif; letter-spacing: -.3px; fill: #797775; stroke: #f3f2f1; stroke-width: 3px; paint-order: stroke; }
.center { width: 1810px; display: flex; flex-direction: column; }
.canvas-row { height: 679px; display: flex; }
.canvas { width: 1761px; padding-left: 285px; }
.frame { width: 1191px; height: 670px; padding: 0 3px 0 12px;
  background:
    repeating-linear-gradient(to bottom, transparent 0 2px, #605e5c 2px 5px, transparent 5px 6px) left top / 3px 100% no-repeat,
    repeating-linear-gradient(to bottom, transparent 0 2px, #605e5c 2px 5px, transparent 5px 6px) right top / 3px 100% no-repeat,
    repeating-linear-gradient(to right, #605e5c 0 3px, transparent 3px 6px) left bottom / 100% 3px no-repeat; }
.frame h1 { margin: 0; height: 26px; background: #cbcbcb; color: #d64550; font: bold 19px/24px Roboto, sans-serif; text-align: center; letter-spacing: -.07px; }
.pct { height: 19px; margin: 0 8px 0 100px; padding-top: 4px; line-height: 18px; font-size: 12px; letter-spacing: -.1px; color: #605e5c; text-align: center; }
.pct.low { padding-top: 2px; }
.range { width: 1069px; height: 16px; margin-left: 99px; border: solid #c8c6c4; border-width: 0 1px; background: linear-gradient(#d8d8d8, #d8d8d8) 0 7px / 100% 2px no-repeat; }
.funnel { height: 558.100px; margin-top: 5px; display: grid; grid-template-rows: repeat(17, 1fr); }
.row { display: flex; align-items: center; }
.row b { width: 94px; margin-left: 5px; font-size: 14px; color: #118dff; line-height: 28px; letter-spacing: -.12px; }
.track { width: 1069px; height: 30px; display: flex; justify-content: center; position: relative; }
.track i { background: #000; border: 1px solid #b3b0ad; background-clip: padding-box; height: 30px; display: flex; justify-content: center; color: #fff; font-style: normal; font-size: 12px; line-height: 31px; white-space: nowrap; }
.outside { position: absolute; left: 546px; top: 0; font-size: 12px; line-height: 32px; letter-spacing: -.3px; color: #605e5c; }
.range.end { width: 11px; height: 15px; margin: 5px 0 0 628px; }
.filters { width: 49px; border-left: 1px solid #a19f9d; background: #fff; padding: 20px 0 0 15px; }
.funnel-ico { margin: 22px 0 0 3px; }
.filters span { display: block; writing-mode: vertical-rl; margin-top: 12px; width: 26px; line-height: 26px; font-size: 21.500px; font-weight: 600; margin-left: -5px; }

/* page tabs */
.pages { height: 53px; display: flex; background: #f3f2f1; }
.views { width: 192px; display: flex; border-right: 1.500px solid #979593; }
.view { width: 36px; height: 46px; margin-left: 15px; padding: 11px 0 0 3px; }
.view.on { background: linear-gradient(#117865, #117865) 0 100% / 36px 4px no-repeat; }
.phone { margin: 7px 0 0 39px; }
.prev { margin: 20px 0 0 31px; }
.next { margin: 20px 0 0 25px; }
.ptab { position: relative; height: 53px; line-height: 55px; text-align: center; background: #fff; border-right: 1px solid #c8c6c4; white-space: nowrap; }
.p1 { width: 230px; }
.p2 { width: 133px; }
.p3 { width: 158px; }
.p4 { width: 166px; }
.p5 { width: 166px; }
.p6 { width: 231px; }
.ptab.on { font-weight: 600; border-bottom: 6px solid #117865; letter-spacing: -.2px; }
.x { position: absolute; right: 6px; top: 0; font-size: 15px; line-height: 27px; }
.add { width: 59px; background: #117865; display: flex; justify-content: center; padding-top: 17px; }

/* pane switcher */
.panes { width: 49px; background: #faf9f8; border-left: 1px solid #d8d6d4; display: flex; flex-direction: column; align-items: center; padding: 9px 1px 0 0; gap: 18px; }
.gear { margin-top: auto; height: 48px; width: 48px; border-top: 1px solid #d8d6d4; padding: 8px 0 0 8px; }

/* status bar */
.status { flex: none; height: 38px; border-top: 1px solid #e1dfdd; border-bottom: 2px solid #b3b1ae; box-shadow: inset 0 -1px #000; background: #f3f2f1; display: flex; align-items: center; padding-left: 6px; color: #484644; white-space: nowrap; }
.status span { margin-top: 2px; }
.pg { width: 1309px; letter-spacing: .12px; }
.status .minus { width: 13px; font-weight: 600; margin-top: -2px; }
.slider, .plus { margin-top: -2px; }
.plus { margin-left: 9px; }
.status .pc { width: 63px; margin: -3px 0 0 19px; font-size: 16.500px; }
.upd { margin-left: 20px; letter-spacing: .07px; }

/* taskbar */
.taskbar { flex: none; height: 70px; display: flex; background: linear-gradient(to right, #dfdcd5 0, #dedcd3 100px, #dce2e0 250px, #d8ebef 400px, #d8ebef 580px, #e0eae8 700px, #e6ecdf 860px, #ebecda 1000px, #efead6 1300px, #e8ebd9 1550px, #ece6da 1640px, #eae9da 1800px, #eaeedd 1920px); }
.weather { width: 371px; position: relative; padding: 21px 0 0 30px; }
.temp { position: absolute; left: 42px; top: 8px; width: 36px; height: 24px; border-radius: 12px; background: #f8f7f5; font-size: 16px; line-height: 24px; text-align: center; }
.apps { display: flex; }
.app { width: 66.100px; height: 70px; padding-bottom: 2px; display: flex; align-items: center; justify-content: center; position: relative; }
.app svg { position: relative; }
.app.run::after { content: ""; position: absolute; left: 28px; bottom: 7px; width: 9px; height: 5px; border-radius: 3px; background: #858585; }
.app:nth-child(4) svg { left: 4px; top: -5px; }
.app.active::before { content: ""; position: absolute; left: 4px; top: 5px; width: 57px; height: 58px; border-radius: 6px; background: #f8f6ec; border: 1px solid #e2e0d2; }
.app.active::after { content: ""; position: absolute; left: 21px; bottom: 7px; width: 24px; height: 5px; border-radius: 3px; background: #0a78d4; }
.badge { position: absolute; left: 35px; top: 9px; width: 24px; height: 24px; border-radius: 12px; background: #0078d4; color: #fff; font-size: 16px; line-height: 24px; text-align: center; }
.tray { display: flex; align-items: center; margin-left: 102px; color: #1b1b1b; line-height: 24px; }
.lang { width: 60px; margin: -2px 0 0 18px; text-align: center; font-size: 17px; line-height: 23px; letter-spacing: -.1px; }
.t-wifi { margin: -2px 0 0 14px; }
.t-vol { margin: -2px 0 0 11px; }
.t-bat { margin: -4px 0 0 10px; }
.clock { width: 104px; margin: -4px 0 0 13px; text-align: right; font-size: 17.700px; }
.t-bell { margin: -2px 0 0 13px; }
```
